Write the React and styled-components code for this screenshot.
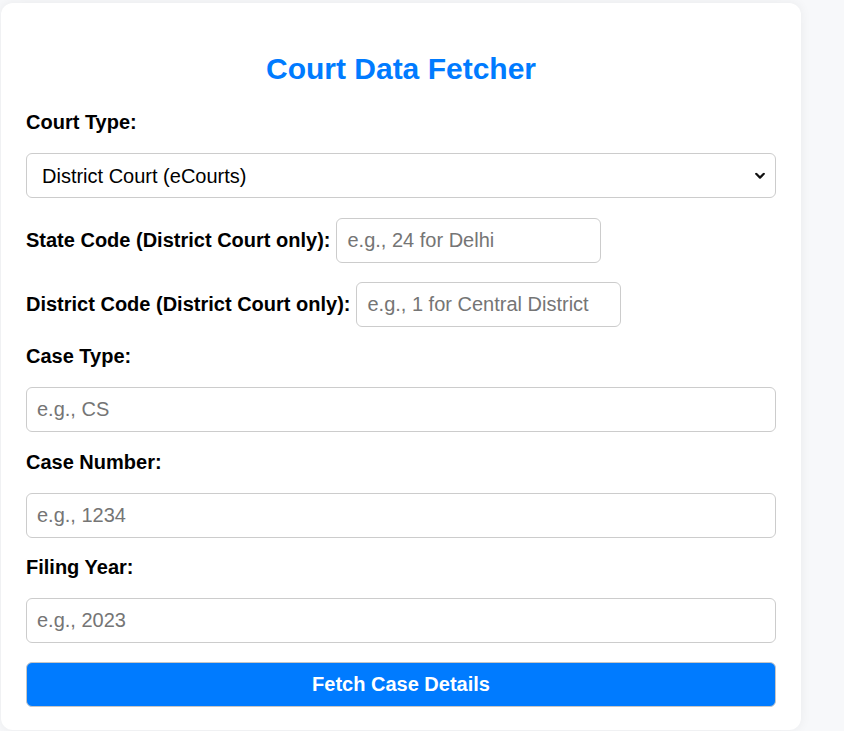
import React from "react";
import styled, { createGlobalStyle } from "styled-components";

const GlobalStyle = createGlobalStyle`
  html, body {
    margin: 0;
    padding: 0;
    background: #f7f8fa;
    font-family: "Liberation Sans", Arial, sans-serif;
  }
  * { box-sizing: border-box; }
`;

const Page = styled.div`
  padding: 3px 0 0 1px;
  min-height: 731px;
`;

const Card = styled.form`
  width: 800px;
  background: #ffffff;
  border-radius: 12px;
  box-shadow: 0 0 12px rgba(0, 0, 0, 0.06);
  padding: 25px 25px 23px;
  display: flex;
  flex-direction: column;
`;

const Title = styled.h2`
  margin: 24px 0 23.5px;
  text-align: center;
  color: #007bff;
  font-size: 30px;
  line-height: 34.5px;
  font-weight: bold;
`;

const Group = styled.div`
  display: flex;
  flex-direction: column;
  margin-bottom: ${(p) => p.$mb}px;
`;

const InlineGroup = styled.div`
  display: flex;
  align-items: center;
  gap: 6px;
  margin-bottom: ${(p) => p.$mb}px;
`;

const Label = styled.label`
  display: block;
  font-size: 20px;
  line-height: 23px;
  font-weight: bold;
  color: #000;
  padding-top: ${(p) => (p.$inline ? 0 : 1)}px;
  margin-bottom: ${(p) => (p.$inline ? 0 : 19)}px;
  white-space: nowrap;
`;

const Input = styled.input`
  width: ${(p) => (p.$narrow ? "265px" : "100%")};
  height: 45px;
  padding: 0 10px;
  border: 1px solid #cccccc;
  border-radius: 6px;
  font-family: "Liberation Sans", Arial, sans-serif;
  font-size: 20px;
  color: #000;
  background: #fff;
  outline: none;
  &::placeholder {
    color: #757575;
  }
`;

const SelectWrap = styled.div`
  position: relative;
  width: 100%;
`;

const Select = styled.select`
  width: 100%;
  height: 45px;
  padding: 0 30px 0 15px;
  border: 1px solid #cccccc;
  border-radius: 6px;
  font-family: "Liberation Sans", Arial, sans-serif;
  font-size: 20px;
  color: #000;
  background: #fff;
  appearance: none;
  -webkit-appearance: none;
  outline: none;
`;

const Chevron = styled.svg`
  position: absolute;
  right: 6px;
  top: 50%;
  width: 10px;
  height: 7px;
  transform: translateY(-50%);
  margin-right: 5px;
  pointer-events: none;
`;

const Button = styled.button`
  width: 100%;
  height: 45px;
  border: 1px solid #c6c6c6;
  border-radius: 6px;
  background: #007bff;
  color: #fff;
  font-family: "Liberation Sans", Arial, sans-serif;
  font-size: 20px;
  font-weight: bold;
  cursor: pointer;
`;

export default function App() {
  return (
    <>
      <GlobalStyle />
      <Page>
        <Card onSubmit={(e) => e.preventDefault()}>
          <Title>Court Data Fetcher</Title>

          <Group $mb={20}>
            <Label htmlFor="courtType">Court Type:</Label>
            <SelectWrap>
              <Select id="courtType" defaultValue="district">
                <option value="district">District Court (eCourts)</option>
                <option value="high">High Court</option>
              </Select>
              <Chevron viewBox="0 0 10 7">
                <path
                  d="M1.2 1.3 L5 5.1 L8.8 1.3"
                  fill="none"
                  stroke="#111"
                  strokeWidth="2.2"
                  strokeLinecap="round"
                  strokeLinejoin="round"
                />
              </Chevron>
            </SelectWrap>
          </Group>

          <InlineGroup $mb={19}>
            <Label $inline htmlFor="stateCode">
              State Code (District Court only):
            </Label>
            <Input $narrow id="stateCode" placeholder="e.g., 24 for Delhi" />
          </InlineGroup>

          <InlineGroup $mb={17}>
            <Label $inline htmlFor="districtCode">
              District Code (District Court only):
            </Label>
            <Input
              $narrow
              id="districtCode"
              placeholder="e.g., 1 for Central District"
            />
          </InlineGroup>

          <Group $mb={18}>
            <Label htmlFor="caseType">Case Type:</Label>
            <Input id="caseType" placeholder="e.g., CS" />
          </Group>

          <Group $mb={17}>
            <Label htmlFor="caseNumber">Case Number:</Label>
            <Input id="caseNumber" placeholder="e.g., 1234" />
          </Group>

          <Group $mb={19}>
            <Label htmlFor="filingYear">Filing Year:</Label>
            <Input id="filingYear" placeholder="e.g., 2023" />
          </Group>

          <Button type="submit">Fetch Case Details</Button>
        </Card>
      </Page>
    </>
  );
}
